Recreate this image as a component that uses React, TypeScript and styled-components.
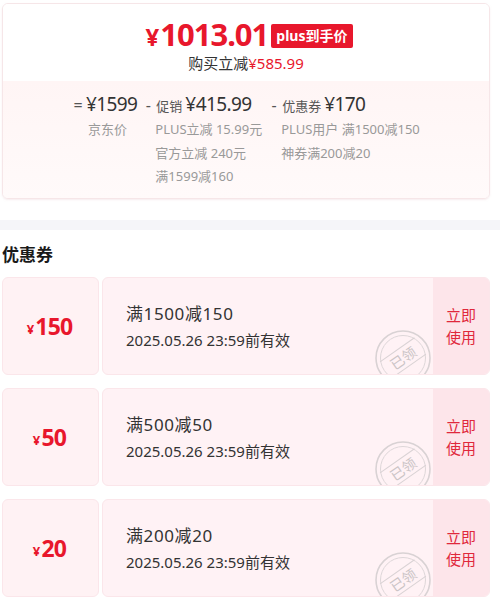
import styled, { createGlobalStyle } from "styled-components";

const GlobalStyle = createGlobalStyle`
  body {
    margin: 0;
    background: #ffffff;
    font-family: "Noto Sans", "Noto Sans CJK SC", sans-serif;
  }
`;

type Coupon = { amount: string; title: string; expire: string };

const coupons: Coupon[] = [
  { amount: "150", title: "满1500减150", expire: "2025.05.26 23:59前有效" },
  { amount: "50", title: "满500减50", expire: "2025.05.26 23:59前有效" },
  { amount: "20", title: "满200减20", expire: "2025.05.26 23:59前有效" },
];

const Stamp = () => (
  <svg width="60" height="60" viewBox="0 0 60 60">
    <circle cx="30" cy="30" r="27" fill="none" stroke="#d9d2d4" strokeWidth="1.6" />
    <circle cx="30" cy="30" r="22.5" fill="none" stroke="#ddd6d8" strokeWidth="1" />
    <g transform="rotate(-35 30 30)">
      <line x1="9" y1="20" x2="51" y2="20" stroke="#d9d2d4" strokeWidth="1" />
      <line x1="9" y1="40" x2="51" y2="40" stroke="#d9d2d4" strokeWidth="1" />
      <text
        x="30"
        y="35.5"
        textAnchor="middle"
        fontSize="14"
        fill="#cbc4c6"
        fontFamily="Noto Sans CJK SC, sans-serif"
      >
        已领
      </text>
    </g>
  </svg>
);

const App = () => {
  return (
    <>
      <GlobalStyle />
      <Page>
        <PriceCard>
          <PriceTop>
            <PriceRow>
              <BigPrice>
                <Yen>¥</Yen>1013.01
              </BigPrice>
              <Badge>plus到手价</Badge>
            </PriceRow>
            <SaveLine>
              购买立减<Red>¥585.99</Red>
            </SaveLine>
          </PriceTop>
          <Breakdown>
            <Col>
              <Head>
                <Op>=</Op>
                <Amount>¥1599</Amount>
              </Head>
              <SubList indent={15}>
                <Sub>京东价</Sub>
              </SubList>
            </Col>
            <Col>
              <Head>
                <Op>-</Op>
                <Label>促销</Label>
                <Amount>¥415.99</Amount>
              </Head>
              <SubList indent={12}>
                <Sub>PLUS立减 15.99元</Sub>
                <Sub>官方立减 240元</Sub>
                <Sub>满1599减160</Sub>
              </SubList>
            </Col>
            <Col>
              <Head>
                <Op>-</Op>
                <Label>优惠券</Label>
                <Amount>¥170</Amount>
              </Head>
              <SubList indent={12}>
                <Sub>PLUS用户 满1500减150</Sub>
                <Sub>神券满200减20</Sub>
              </SubList>
            </Col>
          </Breakdown>
        </PriceCard>

        <Divider />

        <SectionTitle>优惠券</SectionTitle>

        <CouponList>
          {coupons.map((c) => (
            <CouponRow key={c.amount}>
              <CouponLeft>
                <CouponYen>¥</CouponYen>
                {c.amount}
              </CouponLeft>
              <CouponBody>
                <CouponInfo>
                  <CouponTitle>{c.title}</CouponTitle>
                  <CouponDate>{c.expire}</CouponDate>
                </CouponInfo>
                <StampWrap>
                  <Stamp />
                </StampWrap>
                <UseButton>
                  立即
                  <br />
                  使用
                </UseButton>
              </CouponBody>
            </CouponRow>
          ))}
        </CouponList>
      </Page>
    </>
  );
};

const Page = styled.div`
  width: 490px;
  padding: 3px 0 0 2px;
  box-sizing: border-box;
`;

const PriceCard = styled.div`
  border: 1px solid #f6e6e8;
  border-radius: 6px;
  overflow: hidden;
  height: 196px;
  box-sizing: border-box;
  display: flex;
  flex-direction: column;
  box-shadow: 0 1px 2px rgba(230, 200, 205, 0.35);
`;

const PriceTop = styled.div`
  background: #ffffff;
  height: 77px;
  display: flex;
  flex-direction: column;
  align-items: center;
  padding-top: 13px;
  box-sizing: border-box;
`;

const PriceRow = styled.div`
  display: flex;
  align-items: center;
  gap: 3px;
  margin-left: 6px;
  height: 36px;
`;

const BigPrice = styled.span`
  color: #e8172c;
  font-size: 31px;
  font-weight: 700;
  line-height: 36px;
  letter-spacing: -1px;
`;

const Yen = styled.span`
  font-size: 24px;
  margin-right: 2px;
`;

const Badge = styled.span`
  background: #e8172c;
  color: #ffffff;
  font-size: 14px;
  font-weight: 700;
  height: 24px;
  line-height: 24px;
  padding: 0 5px;
  border-radius: 2px;
  margin-top: 2px;
`;

const SaveLine = styled.div`
  font-size: 15px;
  color: #333333;
  line-height: 20px;
  margin-top: 0;
`;

const Red = styled.span`
  color: #e8172c;
`;

const Breakdown = styled.div`
  flex: 1;
  background: linear-gradient(180deg, #fff5f5 0%, #fffafa 100%);
  display: flex;
  padding: 10px 0 0 70px;
  gap: 6px;
`;

const Col = styled.div`
  display: flex;
  flex-direction: column;
`;

const Head = styled.div`
  display: flex;
  align-items: baseline;
  gap: 3px;
  height: 27px;
  color: #333333;
`;

const Op = styled.span`
  font-size: 16px;
  color: #555555;
  width: 10px;
  text-align: center;
`;

const Label = styled.span`
  font-size: 13px;
  color: #555555;
`;

const Amount = styled.span`
  font-size: 19px;
  color: #333333;
  letter-spacing: -0.6px;
`;

const SubList = styled.div<{ indent: number }>`
  display: flex;
  flex-direction: column;
  padding-left: ${({ indent }) => indent}px;
  padding-right: 1px;
`;

const Sub = styled.div`
  font-size: 13px;
  color: #999999;
  line-height: 23.5px;
  white-space: nowrap;
`;

const Divider = styled.div`
  height: 10px;
  margin: 21px 0 0 -2px;
  width: 500px;
  background: #f5f5f9;
`;

const SectionTitle = styled.div`
  font-size: 17px;
  font-weight: 700;
  color: #1a1a1a;
  line-height: 24px;
  margin-top: 13px;
`;

const CouponList = styled.div`
  display: flex;
  flex-direction: column;
  gap: 13px;
  margin-top: 10px;
`;

const CouponRow = styled.div`
  display: flex;
  height: 98px;
  gap: 3px;
`;

const CouponLeft = styled.div`
  width: 97px;
  background: #fff2f4;
  border: 1px solid #fbe6ea;
  border-radius: 6px;
  box-sizing: border-box;
  display: flex;
  align-items: center;
  justify-content: center;
  color: #e8172c;
  font-size: 23px;
  font-weight: 700;
  letter-spacing: -0.8px;
  padding-right: 2px;
`;

const CouponYen = styled.span`
  font-size: 13px;
  margin-right: 2px;
  margin-top: 5px;
`;

const CouponBody = styled.div`
  flex: 1;
  position: relative;
  overflow: hidden;
  display: flex;
  background: #fff2f5;
  border: 1px solid #fbe6ea;
  border-radius: 6px;
  box-sizing: border-box;
`;

const CouponInfo = styled.div`
  flex: 1;
  display: flex;
  flex-direction: column;
  justify-content: center;
  padding-left: 23px;
  padding-top: 2px;
`;

const CouponTitle = styled.div`
  font-size: 17px;
  color: #333333;
  line-height: 24px;
  letter-spacing: 0.6px;
`;

const CouponDate = styled.div`
  font-size: 15px;
  color: #333333;
  line-height: 24px;
  margin-top: 2px;
`;

const StampWrap = styled.div`
  position: absolute;
  right: 56px;
  bottom: -14px;
  height: 60px;
`;

const UseButton = styled.div`
  width: 56px;
  background: #fde5ea;
  color: #e0283c;
  font-size: 15px;
  line-height: 22px;
  display: flex;
  align-items: center;
  justify-content: center;
  text-align: center;
  position: relative;
`;

export default App;
